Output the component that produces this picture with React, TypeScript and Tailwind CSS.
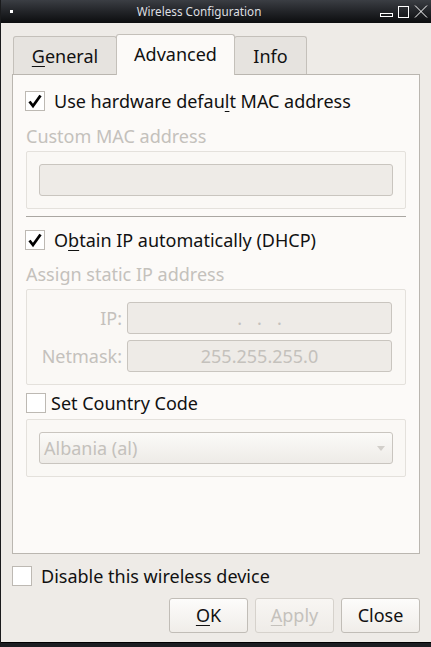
const font = "font-['Noto_Sans',sans-serif]";

const CheckMark = () => (
  <svg width="16" height="16" viewBox="0 0 16 16" className="block">
    <path d="M2.5 8.5 L6 13 L13.5 2.5" fill="none" stroke="#000" strokeWidth="2.8" strokeLinejoin="miter" />
  </svg>
);

const CheckBox = ({ checked }: { checked?: boolean }) => (
  <span className="flex h-[20px] w-[20px] shrink-0 items-center justify-center border border-[#bdb9b3] bg-white">
    {checked && <CheckMark />}
  </span>
);

const Field = ({ children, className = "" }: { children?: React.ReactNode; className?: string }) => (
  <div
    className={`flex h-[32px] items-center rounded-[3px] border border-[#c9c5bf] bg-[#eeebe7] text-[18px] text-[#c4c1bc] ${className}`}
  >
    {children}
  </div>
);

export default function App() {
  return (
    <div className={`flex h-[647px] w-[431px] flex-col overflow-hidden border-l border-[#1a1b1d] bg-[#eeebe7] ${font}`}>
      {/* title bar */}
      <div className="relative flex h-[23px] shrink-0 items-center justify-center bg-gradient-to-b from-[#3b3e44] to-[#0c0d0f] pr-[34px] text-[11.7px] text-[#dcdee0]">
        <span className="absolute left-[9px] top-[10px] h-[3px] w-[3px] bg-white" />
        <span>Wireless Configuration</span>
        <div className="absolute right-[3px] top-[5px] flex items-end gap-[5px]">
          <span className="mb-[1px] h-[4px] w-[13px] border border-white" />
          <span className="h-[12px] w-[11px] border-[1.5px] border-white" />
          <svg width="14" height="13" viewBox="0 0 14 13">
            <path d="M1 0.5 L13 12.5 M13 0.5 L1 12.5" stroke="#fff" strokeWidth="1" />
          </svg>
        </div>
      </div>

      <div className="flex flex-1 flex-col px-[11px]">
        {/* tabs */}
        <div className="mt-[11px] flex h-[40px] items-end pl-[1px] text-[18px] text-[#111]">
          <div className="-mr-px flex h-[38px] w-[104px] items-center justify-center rounded-t-[3px] border border-b-0 border-[#c4c0ba] bg-[#e6e3df] pt-[1px]">
            <span>
              <span className="underline decoration-1 underline-offset-[3px]">G</span>eneral
            </span>
          </div>
          <div className="relative z-10 -mb-px flex h-[41px] w-[119px] items-center justify-center rounded-t-[3px] border border-b-0 border-[#c4c0ba] bg-[#fcfaf8] pb-[2px]">
            Advanced
          </div>
          <div className="-ml-px flex h-[38px] w-[73px] items-center justify-center rounded-t-[3px] border border-b-0 border-[#c4c0ba] bg-[#e6e3df] pt-[1px]">
            Info
          </div>
        </div>

        {/* pane */}
        <div className="flex h-[480px] flex-col border border-[#bab6b0] bg-[#fcfaf8] px-[13px] text-[18px] text-[#111]">
          <div className="mt-[16px] flex items-center">
            <span className="-ml-px">
              <CheckBox checked />
            </span>
            <span className="ml-[9px] leading-[20px]">
              Use hardware defau<span className="underline decoration-1 underline-offset-[3px]">l</span>t MAC address
            </span>
          </div>
          <div className="mt-[14px] leading-[22px] text-[#c4c1bc]">Custom MAC address</div>
          <div className="mt-[4px] flex h-[58px] flex-col justify-center rounded-[2px] border border-[#e4e1dc] bg-[#faf8f5] px-[12px]">
            <Field />
          </div>
          <div className="mt-[7px] h-px bg-[#aaa7a2]" />
          <div className="mt-[13px] flex items-center">
            <span className="-ml-px">
              <CheckBox checked />
            </span>
            <span className="ml-[9px] leading-[20px]">
              O<span className="underline decoration-1 underline-offset-[3px]">b</span>tain IP automatically (DHCP)
            </span>
          </div>
          <div className="mt-[13px] leading-[22px] text-[#c4c1bc]">Assign static IP address</div>
          <div className="mt-[4px] flex h-[96px] flex-col justify-center gap-[6px] rounded-[2px] border border-[#e4e1dc] bg-[#faf8f5] pl-[12px] pr-[13px]">
            <div className="flex items-center">
              <span className="w-[83px] text-right text-[#c4c1bc]">IP:</span>
              <Field className="ml-[5px] flex-1 justify-center tracking-[15px]">
                <span className="pl-[15px]">...</span>
              </Field>
            </div>
            <div className="flex items-center">
              <span className="w-[83px] text-right text-[#c4c1bc]">Netmask:</span>
              <Field className="ml-[5px] flex-1 justify-center">255.255.255.0</Field>
            </div>
          </div>
          <div className="mt-[8px] flex items-center">
            <CheckBox />
            <span className="ml-[5px] leading-[20px]">Set Country Code</span>
          </div>
          <div className="mt-[6px] flex h-[58px] flex-col justify-center rounded-[2px] border border-[#e4e1dc] bg-[#faf8f5] px-[12px]">
            <div className="flex h-[32px] items-center justify-between rounded-[3px] border border-[#c9c5bf] bg-gradient-to-b from-[#fbfaf8] to-[#eeebe7] pl-[4px] pr-[7px] text-[#c4c1bc]">
              <span>Albania (al)</span>
              <svg width="8" height="5" viewBox="0 0 8 5">
                <path d="M0 0 H8 L4 5 Z" fill="#d2cfca" />
              </svg>
            </div>
          </div>
        </div>

        {/* bottom */}
        <div className="mt-[11px] flex items-center text-[18px] text-[#111]">
          <CheckBox />
          <span className="ml-[9px] leading-[22px]">Disable this wireless device</span>
        </div>
        <div className="mt-[11px] flex justify-end gap-[7px] text-[18px]">
          <button className="flex h-[35px] w-[79px] items-center justify-center rounded-[3px] border border-[#c1bdb7] bg-gradient-to-b from-[#fdfcfb] to-[#f0ede9] text-[#111]">
            <span className="underline decoration-1 underline-offset-[3px]">O</span>K
          </button>
          <button className="flex h-[35px] w-[79px] items-center justify-center rounded-[3px] border border-[#d6d2cc] bg-gradient-to-b from-[#f8f6f3] to-[#efece8] text-[#c4c1bc]">
            <span className="underline decoration-1 underline-offset-[3px]">A</span>pply
          </button>
          <button className="flex h-[35px] w-[79px] items-center justify-center rounded-[3px] border border-[#c1bdb7] bg-gradient-to-b from-[#fdfcfb] to-[#f0ede9] text-[#111]">
            Close
          </button>
        </div>
      </div>
      <div className="h-[5px] shrink-0 border-t border-[#000] bg-[#1c1e22]" />
    </div>
  );
}
